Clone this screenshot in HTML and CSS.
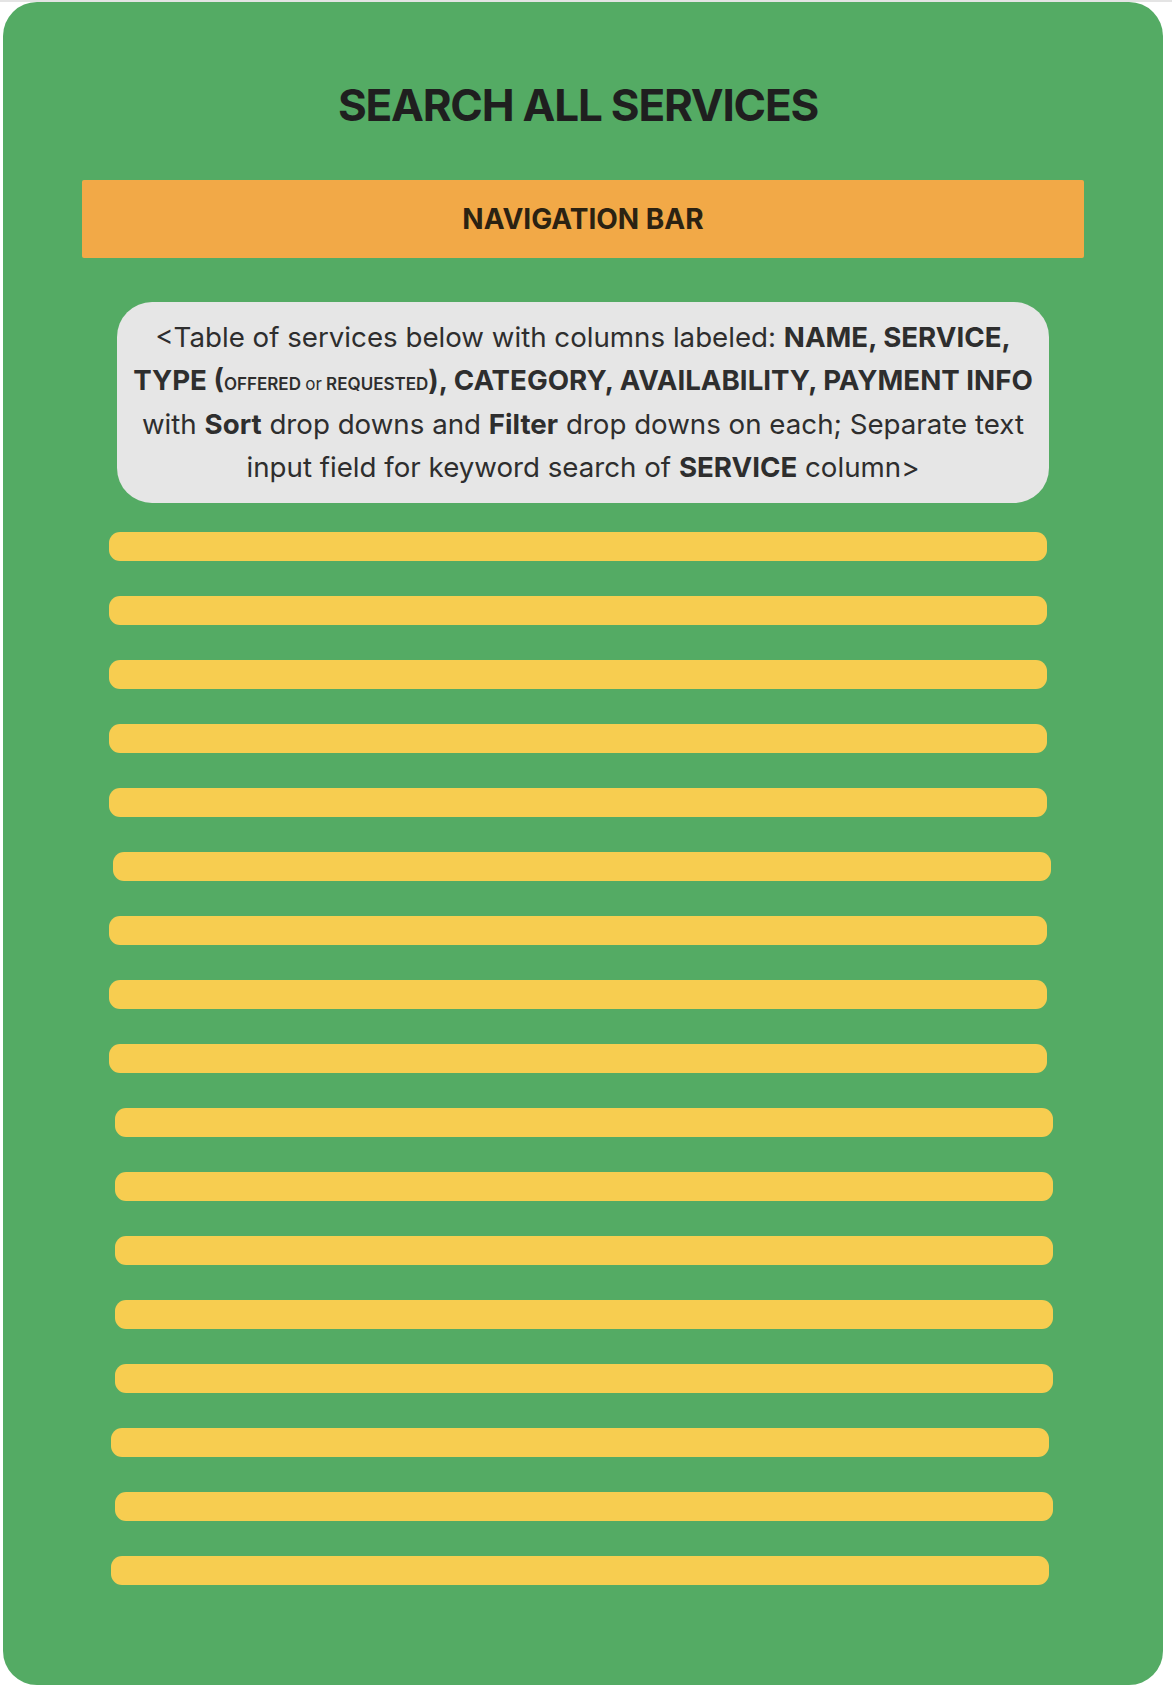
FILE: index.html
```html
<!DOCTYPE html>
<html lang="en">
<head>
<meta charset="utf-8">
<title>Search All Services</title>
<link rel="stylesheet" href="styles.css">
</head>
<body>
<main class="card">
  <h1 class="title">SEARCH ALL SERVICES</h1>
  <nav class="navbar">NAVIGATION BAR</nav>
  <p class="note">&lt;Table of services below with columns labeled: <b>NAME, SERVICE,</b><br><b>TYPE (<span class="sc">OFFERED <span class="sc-or">or</span> REQUESTED</span>), CATEGORY, AVAILABILITY, PAYMENT INFO</b><br>with <b>Sort</b> drop downs and <b>Filter</b> drop downs on each; Separate text<br>input field for keyword search of <b>SERVICE</b> column&gt;</p>
  <div class="rows">
    <div class="bar"></div>
    <div class="bar"></div>
    <div class="bar"></div>
    <div class="bar"></div>
    <div class="bar"></div>
    <div class="bar shift-4"></div>
    <div class="bar"></div>
    <div class="bar"></div>
    <div class="bar"></div>
    <div class="bar shift-6"></div>
    <div class="bar shift-6"></div>
    <div class="bar shift-6"></div>
    <div class="bar shift-6"></div>
    <div class="bar shift-6"></div>
    <div class="bar shift-2"></div>
    <div class="bar shift-6"></div>
    <div class="bar shift-2"></div>
  </div>
</main>
</body>
</html>
```
FILE: styles.css
```css
html, body {
  margin: 0;
  padding: 0;
  background: #ffffff;
}

body {
  border-top: 2px solid #e4e4e4;
  font-family: Inter, "Noto Sans", "Liberation Sans", sans-serif;
}

.card {
  box-sizing: border-box;
  width: 1160px;
  height: 1683px;
  margin: 0 0 0 3px;
  padding-top: 76px;
  background: #54ab64;
  border-radius: 34px;
  display: flex;
  flex-direction: column;
  align-items: center;
}

.title {
  margin: 0;
  font-size: 44px;
  line-height: 54px;
  font-weight: 700;
  color: #1f1f1f;
  letter-spacing: -1.2px;
  transform: translateX(-5px);
}

.navbar {
  margin-top: 48px;
  width: 1002px;
  height: 78px;
  background: #f2a947;
  border-radius: 2px;
  display: flex;
  align-items: center;
  justify-content: center;
  font-size: 28px;
  font-weight: 700;
  color: #2b2212;
}

.note {
  box-sizing: border-box;
  margin: 44px 0 0;
  width: 932px;
  height: 201px;
  padding: 14px 6px 0;
  background: #e6e6e6;
  border-radius: 35px;
  text-align: center;
  font-size: 27.7px;
  line-height: 43.3px;
  color: #2e2e2e;
}

.note b {
  font-weight: 700;
}

.sc {
  font-size: 17px;
  line-height: 1;
  font-weight: 600;
}

.sc-or {
  font-weight: 400;
}

.rows {
  margin-top: 29px;
  align-self: stretch;
  padding-left: 106px;
  display: flex;
  flex-direction: column;
  gap: 35px;
}

.bar {
  width: 938px;
  height: 29px;
  background: #f7cd50;
  border-radius: 11px;
}

.bar.shift-2 { margin-left: 2px; }
.bar.shift-4 { margin-left: 4px; }
.bar.shift-6 { margin-left: 6px; }
```
